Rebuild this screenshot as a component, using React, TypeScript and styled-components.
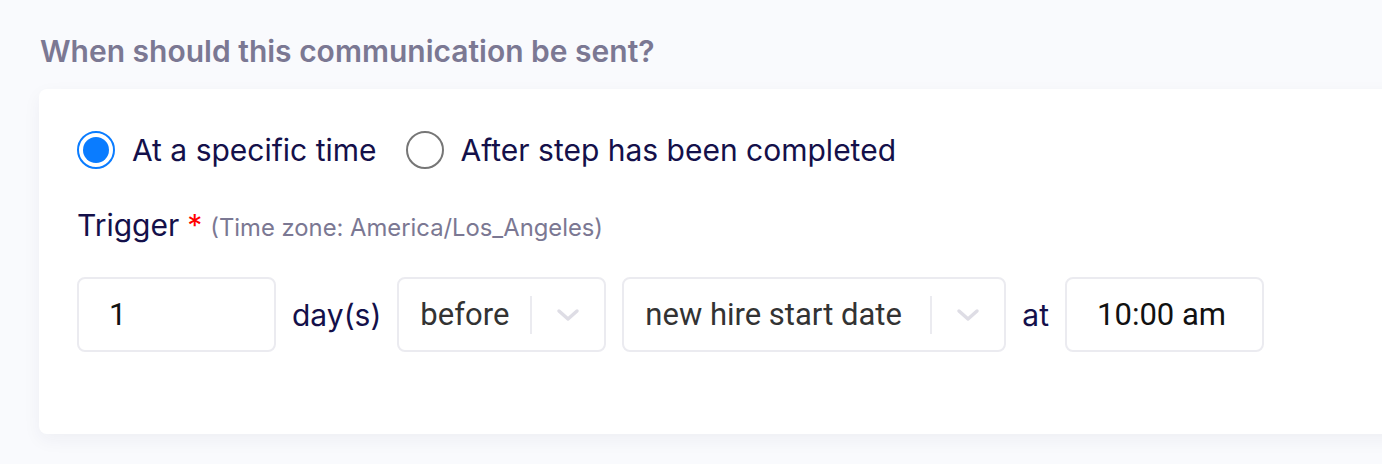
import React, { useState } from "react";
import styled, { createGlobalStyle } from "styled-components";

const GlobalStyle = createGlobalStyle`
  html, body {
    margin: 0;
    padding: 0;
    background: #f9fafd;
    overflow: hidden;
  }
  body {
    font-family: Inter, "Noto Sans", sans-serif;
  }
`;

const Page = styled.div`
  padding: 32px 0 0 39px;
  height: 464px;
  box-sizing: border-box;
`;

const Heading = styled.h2`
  margin: 0 0 19px 1px;
  font-size: 30px;
  line-height: 38px;
  font-weight: 600;
  color: #7b7893;
`;

const Card = styled.div`
  width: 1400px;
  height: 345px;
  box-sizing: border-box;
  background: #fff;
  border-radius: 8px;
  box-shadow: 0 6px 18px rgba(30, 30, 70, 0.05);
  padding: 42px 0 0 38px;
`;

const RadioRow = styled.div`
  display: flex;
  align-items: center;
  gap: 29px;
  height: 38px;
`;

const RadioOption = styled.label`
  display: flex;
  align-items: center;
  gap: 17px;
  cursor: pointer;
  font-size: 30px;
  color: #14104a;
`;

const RadioCircle = styled.span<{ $checked: boolean }>`
  width: 38px;
  height: 38px;
  box-sizing: border-box;
  border-radius: 50%;
  border: 2px solid ${(p) => (p.$checked ? "#0a7cff" : "#767676")};
  display: flex;
  align-items: center;
  justify-content: center;

  &::after {
    content: "";
    display: ${(p) => (p.$checked ? "block" : "none")};
    width: 26px;
    height: 26px;
    border-radius: 50%;
    background: #0a7cff;
  }
`;

const Label = styled.div`
  margin-top: 38px;
  display: flex;
  align-items: baseline;
  font-size: 30px;
  line-height: 36px;
  color: #14104a;
`;

const Required = styled.span`
  color: #ff0000;
  margin-left: 8px;
`;

const Hint = styled.span`
  margin-left: 8px;
  font-size: 23.8px;
  color: #7b7893;
`;

const FieldRow = styled.div`
  margin-top: 31px;
  display: flex;
  align-items: center;
  gap: 16px;
`;

const TextBox = styled.div`
  width: 199px;
  height: 75px;
  box-sizing: border-box;
  border: 2px solid #ebebf0;
  border-radius: 8px;
  display: flex;
  align-items: center;
  padding-left: 30px;
  font-family: Roboto, "Liberation Sans", sans-serif;
  font-size: 31px;
  color: #111;
`;

const Word = styled.span`
  font-size: 30px;
  color: #14104a;
`;

const Select = styled.div<{ $width: number }>`
  width: ${(p) => p.$width}px;
  height: 75px;
  box-sizing: border-box;
  border: 2px solid #ebebf0;
  border-radius: 8px;
  display: flex;
  align-items: center;
  padding-left: 21px;
  font-family: Roboto, "Liberation Sans", sans-serif;
  font-size: 31px;
  color: #333;
`;

const SelectValue = styled.span`
  flex: 1;
  white-space: nowrap;
`;

const Separator = styled.span`
  width: 2px;
  height: 38px;
  background: #ebebf0;
`;

const Chevron = styled.span`
  width: 72px;
  display: flex;
  justify-content: center;
  color: #dedde5;
`;

const ChevronIcon = () => (
  <svg width="26" height="16" viewBox="0 0 26 16" fill="none">
    <path d="M4 4l9 8 9-8" stroke="currentColor" strokeWidth="3.5" strokeLinecap="round" strokeLinejoin="round" />
  </svg>
);

const App: React.FC = () => {
  const [mode, setMode] = useState("specific");
  return (
    <>
      <GlobalStyle />
      <Page>
        <Heading>When should this communication be sent?</Heading>
        <Card>
          <RadioRow>
            <RadioOption onClick={() => setMode("specific")}>
              <RadioCircle $checked={mode === "specific"} />
              At a specific time
            </RadioOption>
            <RadioOption onClick={() => setMode("after")}>
              <RadioCircle $checked={mode === "after"} />
              After step has been completed
            </RadioOption>
          </RadioRow>
          <Label>
            Trigger<Required>*</Required>
            <Hint>(Time zone: America/Los_Angeles)</Hint>
          </Label>
          <FieldRow>
            <TextBox>1</TextBox>
            <Word>day(s)</Word>
            <Select $width={209}>
              <SelectValue>before</SelectValue>
              <Separator />
              <Chevron>
                <ChevronIcon />
              </Chevron>
            </Select>
            <Select $width={384}>
              <SelectValue>new hire start date</SelectValue>
              <Separator />
              <Chevron>
                <ChevronIcon />
              </Chevron>
            </Select>
            <Word>at</Word>
            <TextBox>10:00 am</TextBox>
          </FieldRow>
        </Card>
      </Page>
    </>
  );
};

export default App;
